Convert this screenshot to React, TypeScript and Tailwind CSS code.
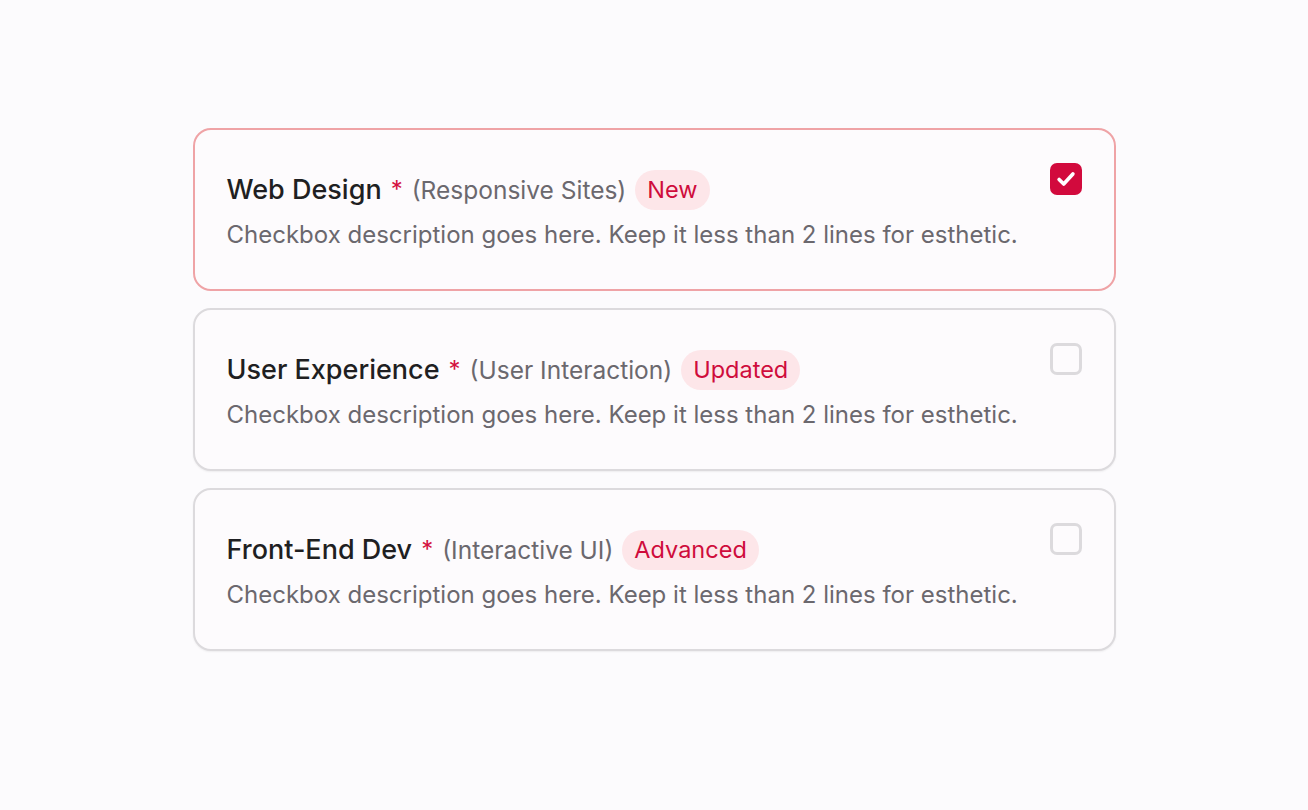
import { useState } from 'react'

interface Option {
  id: string
  title: string
  sub: string
  badge: string
}

const options: Option[] = [
  { id: 'web', title: 'Web Design', sub: '(Responsive Sites)', badge: 'New' },
  { id: 'ux', title: 'User Experience', sub: '(User Interaction)', badge: 'Updated' },
  { id: 'fe', title: 'Front-End Dev', sub: '(Interactive UI)', badge: 'Advanced' },
]

export default function App() {
  const [checked, setChecked] = useState<Record<string, boolean>>({ web: true })

  return (
    <div
      className="min-h-screen bg-[#fcfbfd] flex justify-center pt-[128px]"
      style={{ fontFamily: 'Inter, "Noto Sans", sans-serif' }}
    >
      <div className="w-[923px] flex flex-col gap-[17px]">
        {options.map((o) => {
          const on = !!checked[o.id]
          return (
            <label
              key={o.id}
              className={
                'h-[163px] rounded-[18px] border-2 flex items-start justify-between pl-[32px] pr-[32px] pt-[32px] cursor-pointer ' +
                (on
                  ? 'border-[#efa3a6] bg-[#fdfbfd]'
                  : 'border-[#dcdadd] bg-[#fdfbfd] shadow-[0_1px_2px_rgba(0,0,0,0.06)]')
              }
            >
              <div className="pt-[8px]">
                <div className="flex items-center h-[40px]">
                  <span className="text-[27px] font-medium text-[#1f1f22]">{o.title}</span>
                  <span className="text-[24px] text-[#d4123f] ml-[9px]">*</span>
                  <span className="text-[24.5px] text-[#6b686e] ml-[9px]">{o.sub}</span>
                  <span className="ml-[9px] h-[40px] px-[12px] rounded-full bg-[#fde6e9] text-[#cf0c3c] text-[23.5px] flex items-center">
                    {o.badge}
                  </span>
                </div>
                <p className="text-[24px] text-[#6b686e] mt-[10px] leading-[30px]">
                  Checkbox description goes here. Keep it less than 2 lines for esthetic.
                </p>
              </div>
              <span
                onClick={(e) => {
                  e.preventDefault()
                  setChecked((c) => ({ ...c, [o.id]: !c[o.id] }))
                }}
                className={
                  'mt-[1px] w-[32px] h-[32px] rounded-[7px] flex items-center justify-center shrink-0 ' +
                  (on ? 'bg-[#d20a3d]' : 'border-[3px] border-[#dcdadd] bg-[#fdfbfd]')
                }
              >
                {on && (
                  <svg width="22" height="22" viewBox="0 0 24 24" fill="none" stroke="white" strokeWidth="4" strokeLinecap="round" strokeLinejoin="round">
                    <path d="M4.5 12.5l5 5 10-11" />
                  </svg>
                )}
              </span>
            </label>
          )
        })}
      </div>
    </div>
  )
}
